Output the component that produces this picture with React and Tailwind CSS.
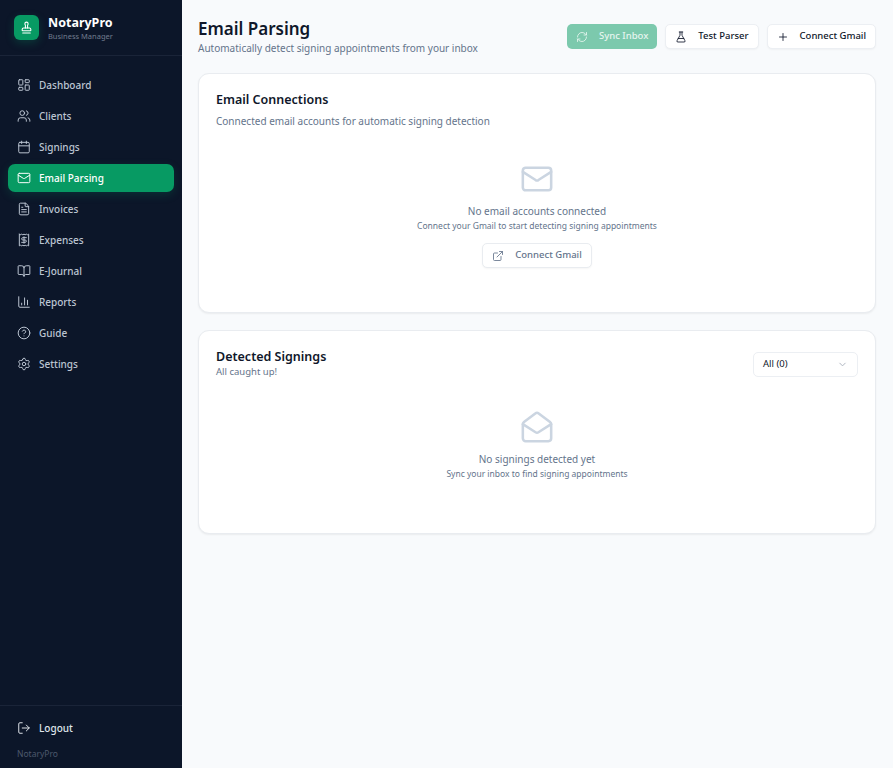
import {
  LayoutDashboard,
  Users,
  Calendar,
  Mail,
  FileText,
  Receipt,
  BookOpen,
  ChartColumn,
  CircleHelp,
  Settings,
  LogOut,
  RefreshCw,
  FlaskConical,
  Plus,
  ExternalLink,
  MailOpen,
  ChevronDown,
  Stamp,
} from "lucide-react";

const navItems = [
  { label: "Dashboard", icon: LayoutDashboard },
  { label: "Clients", icon: Users },
  { label: "Signings", icon: Calendar },
  { label: "Email Parsing", icon: Mail, active: true },
  { label: "Invoices", icon: FileText },
  { label: "Expenses", icon: Receipt },
  { label: "E-Journal", icon: BookOpen },
  { label: "Reports", icon: ChartColumn },
  { label: "Guide", icon: CircleHelp },
  { label: "Settings", icon: Settings },
];

function Sidebar() {
  return (
    <div className="w-[182px] shrink-0 bg-[#0c1629] flex flex-col min-h-screen">
      {/* Logo */}
      <div className="h-[56px] flex items-center gap-[9px] px-[14px] border-b border-[#1a2438]">
        <div className="w-[25px] h-[25px] rounded-[6px] bg-[#079a63] flex items-center justify-center shadow-[0_3px_8px_rgba(7,154,99,0.25)]">
          <Stamp size={13} className="text-white" />
        </div>
        <div>
          <div className="text-[12.5px] leading-[16px] font-bold text-white">NotaryPro</div>
          <div className="text-[7.5px] leading-[10px] text-[#717c8e]">Business Manager</div>
        </div>
      </div>

      {/* Nav */}
      <div className="flex flex-col gap-[3px] px-[8px] pt-[15px]">
        {navItems.map((item) => {
          const Icon = item.icon;
          return (
            <div
              key={item.label}
              className={
                item.active
                  ? "h-[28px] flex items-center gap-[8px] px-[9px] rounded-[7px] bg-[#079a63] text-white font-medium text-[10px] shadow-[0_3px_10px_rgba(7,154,99,0.2)]"
                  : "h-[28px] flex items-center gap-[8px] px-[9px] rounded-[7px] text-[#bcc5d2] font-medium text-[10px]"
              }
            >
              <Icon size={14} strokeWidth={1.7} />
              {item.label}
            </div>
          );
        })}
      </div>

      {/* Logout */}
      <div className="mt-auto border-t border-[#1a2438] px-[8px] pt-[8px] pb-[8px]">
        <div className="h-[28px] flex items-center gap-[8px] px-[9px] text-[#dfe4ea] font-medium text-[10px]">
          <LogOut size={14} strokeWidth={1.7} />
          Logout
        </div>
        <div className="text-[8.5px] leading-[12px] text-[#4d586c] px-[9px] mt-[6px]">NotaryPro</div>
      </div>
    </div>
  );
}

function HeaderButton({ icon: Icon, label, iconSize = 12 }) {
  return (
    <div className="h-[25px] flex items-center gap-[11px] px-[9px] rounded-[5px] bg-white border border-[#eceff3] shadow-[0_1px_2px_rgba(0,0,0,0.04)] text-[9.5px] font-medium text-[#0f172a]">
      <Icon size={iconSize} strokeWidth={1.7} />
      {label}
    </div>
  );
}

export default function App() {
  return (
    <div className="flex min-h-screen bg-[#f8fafc] font-['Noto_Sans',sans-serif]">
      <Sidebar />

      <div className="flex-1 min-w-0 pl-[16px] pr-[17px] pt-[16px]">
        {/* Header */}
        <div className="flex items-start justify-between h-[41px]">
          <div>
            <h1 className="text-[17px] leading-[25px] font-semibold text-[#0f172a]">Email Parsing</h1>
            <p className="text-[10px] leading-[14px] text-[#64748b]">
              Automatically detect signing appointments from your inbox
            </p>
          </div>
          <div className="flex items-center gap-[8px] pt-[8px]">
            <div className="h-[25px] flex items-center gap-[11px] px-[9px] rounded-[5px] bg-[#7cc9ad] text-[9.5px] font-medium text-[#e6f5ef]">
              <RefreshCw size={12} strokeWidth={1.7} />
              Sync Inbox
            </div>
            <HeaderButton icon={FlaskConical} label="Test Parser" />
            <HeaderButton icon={Plus} label="Connect Gmail" />
          </div>
        </div>

        {/* Email Connections */}
        <div className="mt-[16px] h-[240px] rounded-[11px] bg-white border border-[#e9ecf0] shadow-[0_1px_2px_rgba(0,0,0,0.06)] px-[17px] pt-[17px]">
          <h2 className="text-[12.5px] leading-[18px] font-semibold text-[#0f172a]">Email Connections</h2>
          <p className="text-[10px] leading-[14px] mt-[5px] text-[#64748b]">
            Connected email accounts for automatic signing detection
          </p>
          <div className="flex flex-col items-center mt-[34px]">
            <Mail size={34} strokeWidth={1.8} className="text-[#cbd5e1]" />
            <p className="text-[10px] leading-[14px] mt-[8px] text-[#64748b]">No email accounts connected</p>
            <p className="text-[8.5px] leading-[12px] mt-[2px] text-[#64748b]">
              Connect your Gmail to start detecting signing appointments
            </p>
            <div className="h-[25px] mt-[11px] flex items-center gap-[11px] px-[9px] rounded-[5px] bg-white border border-[#e9ecf0] shadow-[0_1px_2px_rgba(0,0,0,0.04)] text-[9.5px] font-medium text-[#64748b]">
              <ExternalLink size={12} strokeWidth={1.7} />
              Connect Gmail
            </div>
          </div>
        </div>

        {/* Detected Signings */}
        <div className="mt-[17px] h-[204px] rounded-[11px] bg-white border border-[#e9ecf0] shadow-[0_1px_2px_rgba(0,0,0,0.06)] px-[17px] pt-[17px]">
          <div className="flex items-start justify-between">
            <div>
              <h2 className="text-[12.5px] leading-[18px] font-semibold text-[#0f172a]">Detected Signings</h2>
              <p className="text-[9.5px] leading-[12px] text-[#64748b]">All caught up!</p>
            </div>
            <div className="w-[105px] h-[25px] mt-[4px] flex items-center justify-between px-[9px] rounded-[5px] bg-white border border-[#eceff3] text-[9.5px] text-[#0f172a]">
              All (0)
              <ChevronDown size={11} className="text-[#a8b0bc]" />
            </div>
          </div>
          <div className="flex flex-col items-center mt-[32px]">
            <MailOpen size={34} strokeWidth={1.8} className="text-[#cbd5e1]" />
            <p className="text-[10px] leading-[14px] mt-[8px] text-[#64748b]">No signings detected yet</p>
            <p className="text-[8.5px] leading-[12px] mt-[2px] text-[#64748b]">
              Sync your inbox to find signing appointments
            </p>
          </div>
        </div>
      </div>
    </div>
  );
}
